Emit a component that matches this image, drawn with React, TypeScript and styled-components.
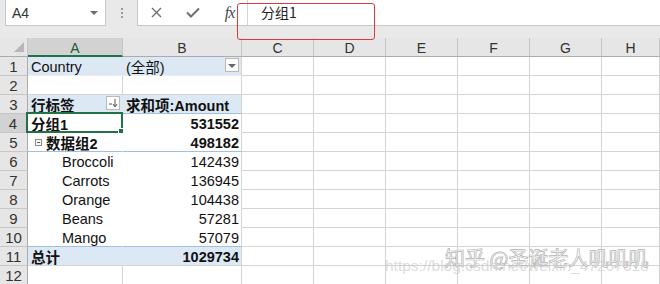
import React from "react";
import styled, { createGlobalStyle } from "styled-components";

const Global = createGlobalStyle`
  html, body { margin: 0; padding: 0; background: #ffffff; }
  body { font-family: "Liberation Sans", "Noto Sans CJK SC", sans-serif; }
`;

const Root = styled.div`
  position: relative;
  width: 660px;
  height: 284px;
  overflow: hidden;
  background: #ffffff;
`;

const FormulaBar = styled.div`
  height: 38px;
  background: #e9e9e9;
  display: flex;
  align-items: flex-start;
  box-sizing: border-box;
`;

const NameBox = styled.div`
  margin-left: 5px;
  width: 101px;
  height: 26px;
  box-sizing: border-box;
  background: #fff;
  border: 1px solid #c8c8c8;
  border-top: none;
  display: flex;
  align-items: center;
  justify-content: space-between;
  padding: 0 7px 0 6px;
  font-size: 14px;
  color: #333;
`;

const Caret = styled.span`
  width: 0;
  height: 0;
  border-left: 4px solid transparent;
  border-right: 4px solid transparent;
  border-top: 4px solid #6d6d6d;
`;

const Dots = styled.div`
  width: 31px;
  height: 26px;
  display: flex;
  flex-direction: column;
  align-items: center;
  justify-content: center;
  gap: 2px;
  span {
    width: 2px;
    height: 2px;
    background: #9a9a9a;
  }
`;

const FxBox = styled.div`
  flex: 1;
  height: 26px;
  background: #fff;
  border-bottom: 1px solid #c8c8c8;
  box-sizing: border-box;
  display: flex;
`;

const FxButtons = styled.div`
  width: 111px;
  display: flex;
  align-items: center;
  border-left: 1px solid #c8c8c8;
  border-right: 1px solid #d4d4d4;
  box-sizing: border-box;
`;

const FxBtn = styled.div<{ $w: number }>`
  width: ${(p) => p.$w}px;
  display: flex;
  justify-content: center;
  align-items: center;
  color: #6f6f6f;
`;

const FxText = styled.span`
  font-family: "Liberation Serif", "DejaVu Serif", serif;
  font-style: italic;
  font-size: 16px;
  color: #4a4a4a;
  letter-spacing: -1px;
`;

const FormulaInput = styled.div`
  flex: 1;
  padding-left: 13px;
  padding-top: 2px;
  font-size: 14px;
  color: #222;
  font-family: "Noto Sans CJK SC", sans-serif;
  line-height: 20px;
`;

const Annotation = styled.div`
  position: absolute;
  left: 237px;
  top: 3px;
  width: 138px;
  height: 37px;
  box-sizing: border-box;
  border: 1px solid #e0383b;
  border-radius: 3px;
  pointer-events: none;
`;

const Sheet = styled.div`
  display: grid;
  grid-template-columns: 28px 95px 119px repeat(5, 72px) 58px;
  grid-auto-rows: 19px;
`;

const ColHead = styled.div<{ $active?: boolean }>`
  box-sizing: border-box;
  background: ${(p) => (p.$active ? "#d2d2d2" : "#e6e6e6")};
  border-right: 1px solid #c6c6c6;
  border-bottom: ${(p) => (p.$active ? "2px solid #217346" : "1px solid #ababab")};
  display: flex;
  align-items: center;
  justify-content: center;
  font-size: 14px;
  color: ${(p) => (p.$active ? "#1e5a36" : "#333")};
  padding-top: 2px;
`;

const Corner = styled.div`
  box-sizing: border-box;
  background: #e6e6e6;
  border-right: 1px solid #c6c6c6;
  border-bottom: 1px solid #ababab;
  position: relative;
  &::after {
    content: "";
    position: absolute;
    right: 3px;
    bottom: 4px;
    width: 0;
    height: 0;
    border-left: 10px solid transparent;
    border-bottom: 10px solid #b8b8b8;
  }
`;

const RowHead = styled.div<{ $active?: boolean }>`
  box-sizing: border-box;
  background: ${(p) => (p.$active ? "#d2d2d2" : "#e6e6e6")};
  border-right: ${(p) => (p.$active ? "2px solid #217346" : "1px solid #ababab")};
  border-bottom: 1px solid #c6c6c6;
  display: flex;
  align-items: center;
  justify-content: center;
  font-size: 15px;
  color: #333;
  padding-top: 1px;
`;

const Cell = styled.div<{
  $bg?: string;
  $bold?: boolean;
  $right?: boolean;
  $indent?: number;
  $rb?: string;
  $bb?: string;
}>`
  position: relative;
  box-sizing: border-box;
  background: ${(p) => p.$bg || "#fff"};
  border-right: 1px solid ${(p) => p.$rb || "#d4d4d4"};
  border-bottom: 1px solid ${(p) => p.$bb || "#d4d4d4"};
  display: flex;
  align-items: center;
  justify-content: ${(p) => (p.$right ? "flex-end" : "flex-start")};
  padding: 1px 2px 0 ${(p) => 3 + (p.$indent || 0)}px;
  font-size: 14.5px;
  font-weight: ${(p) => (p.$bold ? 700 : 400)};
  color: #111;
  white-space: nowrap;
  font-family: "Liberation Sans", "Noto Sans CJK SC", sans-serif;
`;

const Selected = styled.div`
  position: absolute;
  left: -2px;
  top: -2px;
  right: -1px;
  bottom: -1px;
  border: 2px solid #217346;
  pointer-events: none;
  &::after {
    content: "";
    position: absolute;
    right: -4px;
    bottom: -4px;
    width: 5px;
    height: 5px;
    background: #217346;
    border: 1px solid #fff;
  }
`;

const DropBtn = styled.div`
  position: absolute;
  right: 2px;
  top: 1px;
  width: 14px;
  height: 14px;
  box-sizing: border-box;
  background: #fff;
  border: 1px solid #b9b9b9;
  display: flex;
  align-items: center;
  justify-content: center;
`;

const Toggle = styled.span`
  width: 7px;
  height: 7px;
  box-sizing: border-box;
  border: 1px solid #8a8a8a;
  display: inline-flex;
  align-items: center;
  justify-content: center;
  margin-right: 4px;
  &::after {
    content: "";
    width: 3px;
    height: 1px;
    background: #555;
  }
`;

const Watermark = styled.div`
  position: absolute;
  left: 445px;
  top: 243px;
  font-family: "Noto Sans CJK SC", sans-serif;
  font-size: 20px;
  color: rgba(255, 255, 255, 0.9);
  -webkit-text-stroke: 0.7px #b4b4b4;
  white-space: nowrap;
  pointer-events: none;
`;

const WatermarkUrl = styled.div`
  position: absolute;
  left: 385px;
  top: 257px;
  font-family: "Liberation Sans", sans-serif;
  font-size: 15.5px;
  color: rgba(190, 190, 190, 0.55);
  white-space: nowrap;
  pointer-events: none;
`;

const BLUE = "#dde8f5";
const LINE = "#9fbfe3";
const cols = ["A", "B", "C", "D", "E", "F", "G", "H"];

type CellDef = {
  text?: React.ReactNode;
  bg?: string;
  bold?: boolean;
  right?: boolean;
  indent?: number;
  rb?: string;
  bb?: string;
  extra?: React.ReactNode;
};

const FilterIcon = () => (
  <svg width="10" height="10" viewBox="0 0 10 10">
    <line x1="1" y1="6" x2="4" y2="6" stroke="#555" strokeWidth="1" />
    <line x1="7" y1="1" x2="7" y2="8" stroke="#555" strokeWidth="1" />
    <polyline points="5,6 7,9 9,6" fill="none" stroke="#555" strokeWidth="1" />
  </svg>
);

const SmallCaret = styled.span`
  width: 0;
  height: 0;
  border-left: 4px solid transparent;
  border-right: 4px solid transparent;
  border-top: 4px solid #666;
  margin-top: 1px;
`;

const rowDefs: CellDef[][] = [
  [
    { text: "Country", bg: BLUE, rb: BLUE, bb: "#e9eef5" },
    {
      text: "(全部)",
      bg: BLUE,
      bb: "#e9eef5",
      extra: (
        <DropBtn>
          <SmallCaret />
        </DropBtn>
      ),
    },
  ],
  [{}, {}],
  [
    {
      text: "行标签",
      bg: BLUE,
      bold: true,
      rb: BLUE,
      bb: LINE,
      extra: (
        <DropBtn>
          <FilterIcon />
        </DropBtn>
      ),
    },
    { text: "求和项:Amount", bg: BLUE, bold: true, bb: LINE },
  ],
  [
    { text: "分组1", bold: true, rb: "#fff", bb: "#fff", extra: <Selected /> },
    { text: "531552", bold: true, right: true, bb: "#fff" },
  ],
  [
    {
      text: (
        <>
          <Toggle />
          数据组2
        </>
      ),
      bold: true,
      indent: 4,
      rb: "#fff",
      bb: LINE,
    },
    { text: "498182", bold: true, right: true, bb: LINE },
  ],
  [
    { text: "Broccoli", indent: 31, rb: "#fff", bb: "#fff" },
    { text: "142439", right: true, bb: "#fff" },
  ],
  [
    { text: "Carrots", indent: 31, rb: "#fff", bb: "#fff" },
    { text: "136945", right: true, bb: "#fff" },
  ],
  [
    { text: "Orange", indent: 31, rb: "#fff", bb: "#fff" },
    { text: "104438", right: true, bb: "#fff" },
  ],
  [
    { text: "Beans", indent: 31, rb: "#fff", bb: "#fff" },
    { text: "57281", right: true, bb: "#fff" },
  ],
  [
    { text: "Mango", indent: 31, rb: "#fff", bb: LINE },
    { text: "57079", right: true, bb: LINE },
  ],
  [
    { text: "总计", bg: BLUE, bold: true, rb: BLUE },
    { text: "1029734", bg: BLUE, bold: true, right: true },
  ],
  [{}, {}],
];

export default function App() {
  return (
    <Root>
      <Global />
      <FormulaBar>
        <NameBox>
          <span>A4</span>
          <Caret />
        </NameBox>
        <Dots>
          <span />
          <span />
          <span />
        </Dots>
        <FxBox>
          <FxButtons>
            <FxBtn $w={36}>
              <svg width="11" height="11" viewBox="0 0 11 11">
                <path d="M1 1 L10 10 M10 1 L1 10" stroke="#707070" strokeWidth="1.4" />
              </svg>
            </FxBtn>
            <FxBtn $w={38}>
              <svg width="14" height="11" viewBox="0 0 14 11">
                <path d="M1 5.5 L5 9.5 L13 1.5" stroke="#707070" strokeWidth="2" fill="none" />
              </svg>
            </FxBtn>
            <FxBtn $w={35}>
              <FxText>fx</FxText>
            </FxBtn>
          </FxButtons>
          <FormulaInput>分组1</FormulaInput>
        </FxBox>
      </FormulaBar>
      <Sheet>
        <Corner />
        {cols.map((c) => (
          <ColHead key={c} $active={c === "A"}>
            {c}
          </ColHead>
        ))}
        {rowDefs.map((defs, i) => (
          <React.Fragment key={i}>
            <RowHead $active={i === 3}>{i + 1}</RowHead>
            {defs.map((d, j) => (
              <Cell
                key={j}
                $bg={d.bg}
                $bold={d.bold}
                $right={d.right}
                $indent={d.indent}
                $rb={d.rb}
                $bb={d.bb}
              >
                {d.text}
                {d.extra}
              </Cell>
            ))}
            {[0, 1, 2, 3, 4, 5].map((k) => (
              <Cell key={`e${k}`} />
            ))}
          </React.Fragment>
        ))}
      </Sheet>
      <Annotation />
      <WatermarkUrl>https://blog.csdn.net/weixin_47267618</WatermarkUrl>
      <Watermark>知乎 @圣诞老人叽叽叽</Watermark>
    </Root>
  );
}
